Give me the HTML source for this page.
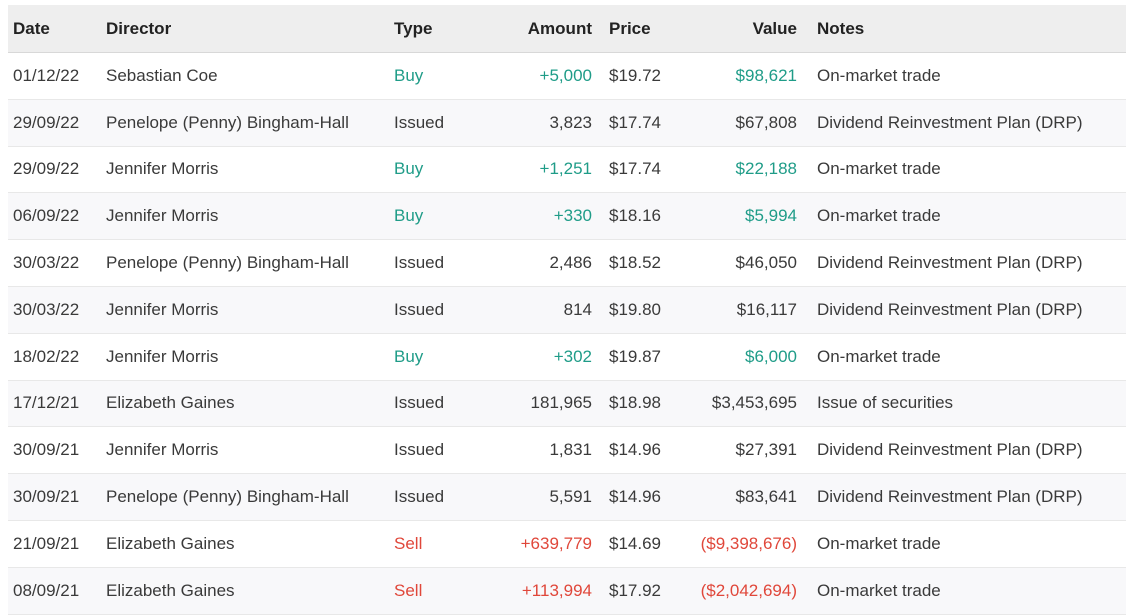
<!DOCTYPE html><html><head><style>
body{margin:0;background:#fff;font-family:"Liberation Sans",sans-serif;}
table{position:absolute;left:8px;top:5px;width:1118px;border-collapse:collapse;font-size:17px;color:#3a3a3a;}
th{background:#eeeeee;height:47px;font-weight:bold;text-align:left;color:#222;border-bottom:1px solid #d8d8d8;padding:0;}
td{height:45.8px;padding:0;border-bottom:1px solid #e8e8e8;}
tr:nth-child(odd) td{background:#f8f8fa;}
.c1{padding-left:5px;width:93px}.c2{width:288px}.c3{width:100px}.c4{width:98px;text-align:right;padding-right:17px}
.c5{width:62px}.c6{width:126px;text-align:right;padding-right:20px}
.g{color:#1f9c88}.r{color:#e0473a}
</style></head><body>
<table>
<tr><th class="c1">Date</th><th class="c2">Director</th><th class="c3">Type</th><th class="c4">Amount</th><th class="c5">Price</th><th class="c6">Value</th><th>Notes</th></tr>
<tr><td class="c1">01/12/22</td><td>Sebastian Coe</td><td class="g">Buy</td><td class="c4 g">+5,000</td><td>$19.72</td><td class="c6 g">$98,621</td><td>On-market trade</td></tr>
<tr><td class="c1">29/09/22</td><td>Penelope (Penny) Bingham-Hall</td><td>Issued</td><td class="c4">3,823</td><td>$17.74</td><td class="c6">$67,808</td><td>Dividend Reinvestment Plan (DRP)</td></tr>
<tr><td class="c1">29/09/22</td><td>Jennifer Morris</td><td class="g">Buy</td><td class="c4 g">+1,251</td><td>$17.74</td><td class="c6 g">$22,188</td><td>On-market trade</td></tr>
<tr><td class="c1">06/09/22</td><td>Jennifer Morris</td><td class="g">Buy</td><td class="c4 g">+330</td><td>$18.16</td><td class="c6 g">$5,994</td><td>On-market trade</td></tr>
<tr><td class="c1">30/03/22</td><td>Penelope (Penny) Bingham-Hall</td><td>Issued</td><td class="c4">2,486</td><td>$18.52</td><td class="c6">$46,050</td><td>Dividend Reinvestment Plan (DRP)</td></tr>
<tr><td class="c1">30/03/22</td><td>Jennifer Morris</td><td>Issued</td><td class="c4">814</td><td>$19.80</td><td class="c6">$16,117</td><td>Dividend Reinvestment Plan (DRP)</td></tr>
<tr><td class="c1">18/02/22</td><td>Jennifer Morris</td><td class="g">Buy</td><td class="c4 g">+302</td><td>$19.87</td><td class="c6 g">$6,000</td><td>On-market trade</td></tr>
<tr><td class="c1">17/12/21</td><td>Elizabeth Gaines</td><td>Issued</td><td class="c4">181,965</td><td>$18.98</td><td class="c6">$3,453,695</td><td>Issue of securities</td></tr>
<tr><td class="c1">30/09/21</td><td>Jennifer Morris</td><td>Issued</td><td class="c4">1,831</td><td>$14.96</td><td class="c6">$27,391</td><td>Dividend Reinvestment Plan (DRP)</td></tr>
<tr><td class="c1">30/09/21</td><td>Penelope (Penny) Bingham-Hall</td><td>Issued</td><td class="c4">5,591</td><td>$14.96</td><td class="c6">$83,641</td><td>Dividend Reinvestment Plan (DRP)</td></tr>
<tr><td class="c1">21/09/21</td><td>Elizabeth Gaines</td><td class="r">Sell</td><td class="c4 r">+639,779</td><td>$14.69</td><td class="c6 r">($9,398,676)</td><td>On-market trade</td></tr>
<tr><td class="c1">08/09/21</td><td>Elizabeth Gaines</td><td class="r">Sell</td><td class="c4 r">+113,994</td><td>$17.92</td><td class="c6 r">($2,042,694)</td><td>On-market trade</td></tr>
</table>
</body></html>
